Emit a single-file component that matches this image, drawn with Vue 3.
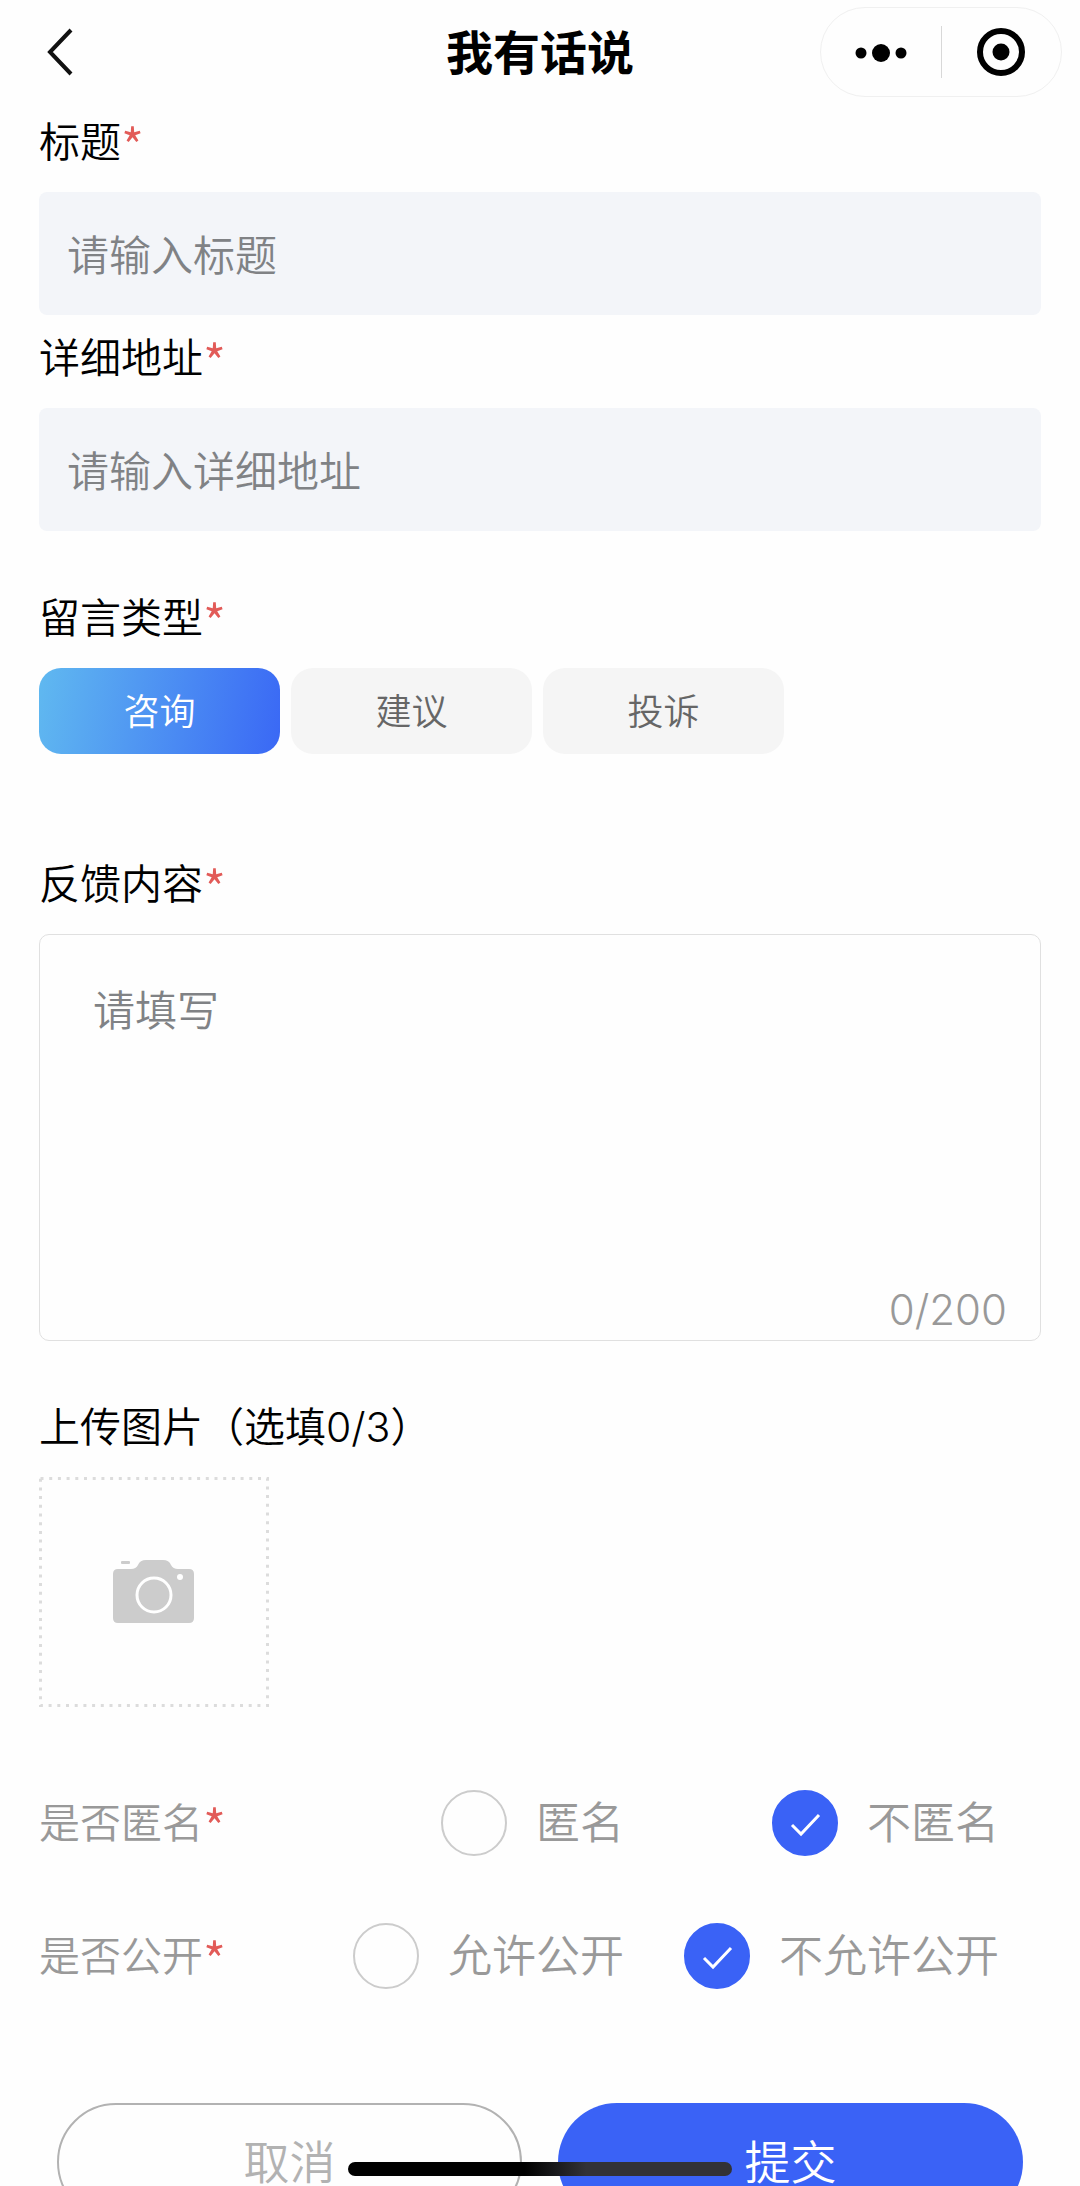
<template>
  <div class="screen">
    <header class="navbar">
      <button class="back" aria-label="返回">
        <svg width="28" height="50" viewBox="0 0 28 50">
          <path d="M25 3 L4 25 L25 47" fill="none" stroke="#111" stroke-width="4" />
        </svg>
      </button>
      <h1>我有话说</h1>
      <div class="capsule">
        <button aria-label="更多">
          <svg width="54" height="50" viewBox="0 0 54 50">
            <circle cx="7" cy="26" r="5.5" />
            <circle cx="27" cy="26" r="9" />
            <circle cx="47" cy="26" r="5.5" />
          </svg>
        </button>
        <span class="capsuleLine"></span>
        <button aria-label="关闭">
          <svg width="50" height="50" viewBox="0 0 50 50">
            <circle cx="25" cy="25" r="21" fill="none" stroke="#000" stroke-width="6" />
            <circle cx="25" cy="25" r="8.5" />
          </svg>
        </button>
      </div>
    </header>

    <form @submit.prevent>
      <div class="field">
        <label class="label" for="title">标题<i>*</i></label>
        <input id="title" v-model="form.title" class="textInput" type="text" placeholder="请输入标题" />
      </div>

      <div class="field">
        <label class="label" for="address">详细地址<i>*</i></label>
        <input id="address" v-model="form.address" class="textInput" type="text" placeholder="请输入详细地址" />
      </div>

      <div class="field typeField">
        <div id="typeLabel" class="label">留言类型<i>*</i></div>
        <div class="types" role="group" aria-labelledby="typeLabel">
          <button
            v-for="type in types"
            :key="type"
            type="button"
            class="type"
            :class="{ active: form.type === type }"
            :aria-pressed="form.type === type"
            @click="form.type = type"
          >{{ type }}</button>
        </div>
      </div>

      <div class="field contentField">
        <label class="label" for="content">反馈内容<i>*</i></label>
        <div class="contentBox">
          <textarea id="content" v-model="form.content" maxlength="200" placeholder="请填写"></textarea>
          <div class="counter">{{ form.content.length }}/200</div>
        </div>
      </div>

      <div class="field uploadField">
        <div class="label">上传图片（选填<span class="digits">0/3</span>）</div>
        <button type="button" class="upload" aria-label="上传图片">
          <svg width="230" height="230" viewBox="0 0 230 230">
            <rect x="1.5" y="1.5" width="227" height="227" fill="none" stroke="#dcdcdc" stroke-width="3" stroke-dasharray="3 5.7" />
            <path
              d="M79 92 H92 Q97 92 99 88 Q101 83 107 83 H124 Q130 83 132 88 Q134 92 139 92 H150 Q155 92 155 97 V141 Q155 146 150 146 H79 Q74 146 74 141 V97 Q74 92 79 92 Z"
              fill="#ccc"
            />
            <rect x="82" y="84" width="9" height="3" rx="1" fill="#ccc" />
            <circle cx="115" cy="118" r="17" fill="none" stroke="#fff" stroke-width="3" />
            <circle cx="141" cy="100" r="3" fill="#fff" />
          </svg>
        </button>
      </div>

      <div class="choices">
        <div v-for="row in rows" :key="row.name" class="choice" role="radiogroup" :aria-label="row.label">
          <div class="label choiceLabel">{{ row.label }}<i>*</i></div>
          <label v-for="option in row.options" :key="option" class="option">
            <span class="radio">
              <input v-model="form[row.name]" type="radio" :name="row.name" :value="option" />
              <svg v-if="form[row.name] === option" width="66" height="66" viewBox="0 0 66 66">
                <path d="M20 35 L29 44 L47 25" fill="none" stroke="#fff" stroke-width="3" />
              </svg>
            </span>
            <span class="optionText">{{ option }}</span>
          </label>
        </div>
      </div>

      <div class="actions">
        <button type="button" class="cancel">取消</button>
        <button type="submit" class="submit">提交</button>
      </div>
    </form>

    <div class="homeBar"></div>
  </div>
</template>

<script setup>
import { reactive } from 'vue'

const types = ['咨询', '建议', '投诉']

const rows = [
  { name: 'anonymous', label: '是否匿名', options: ['匿名', '不匿名'] },
  { name: 'open', label: '是否公开', options: ['允许公开', '不允许公开'] }
]

const form = reactive({
  title: '',
  address: '',
  type: '咨询',
  content: '',
  anonymous: '不匿名',
  open: '不允许公开'
})
</script>

<style>
body {
  margin: 0;
  background-color: #fefefe;
}
</style>

<style scoped>
.screen {
  height: 100vh;
  overflow-y: auto;
  scrollbar-width: none;
  box-sizing: border-box;
  background-color: #fefefe;
  color: #000;
  font-family: "Noto Sans CJK SC", sans-serif;
  font-weight: 350;
}
.screen * {
  box-sizing: border-box;
}
button,
input,
textarea {
  font-family: inherit;
  font-weight: inherit;
  margin: 0;
}
button {
  padding: 0;
  border: none;
  background: none;
  cursor: pointer;
}
svg {
  display: block;
}

/* top bar */
.navbar {
  display: grid;
  grid-template-columns: 1fr auto 1fr;
  align-items: center;
  height: 103px;
  padding: 0 18px 0 46px;
}
.back {
  justify-self: start;
}
.navbar h1 {
  margin: 0;
  padding: 0 28px 4px 0;
  font-size: 47px;
  line-height: 60px;
  font-weight: 700;
}
.capsule {
  justify-self: end;
  display: grid;
  grid-template-columns: 1fr 1px 1fr;
  align-items: center;
  justify-items: center;
  width: 242px;
  height: 90px;
  border: 1px solid #f0f0f0;
  border-radius: 45px;
}
.capsuleLine {
  width: 1px;
  height: 52px;
  background-color: #d8d8d8;
}

/* form */
form {
  padding: 6px 39px 0;
}
.field {
  margin-bottom: 10px;
}
.label {
  display: block;
  margin-bottom: 23px;
  font-size: 41px;
  line-height: 60px;
}
.label i {
  font-style: normal;
  font-size: 50px;
  line-height: 0;
  vertical-align: -9px;
  color: #e25b58;
}
.digits {
  font-family: Inter, "Noto Sans CJK SC", sans-serif;
  line-height: 0;
}
.textInput {
  display: block;
  width: 100%;
  height: 123px;
  padding: 0 28px 2px;
  border: none;
  border-radius: 8px;
  background-color: #f3f5f9;
  font-size: 42px;
}
.textInput::placeholder,
textarea::placeholder {
  color: #808285;
  opacity: 1;
}
.typeField {
  margin-top: 54px;
}
.types {
  display: flex;
  gap: 11px;
}
.type {
  width: 241px;
  height: 86px;
  padding-bottom: 4px;
  border-radius: 22px;
  background-color: #f5f5f5;
  color: #666;
  font-size: 36px;
}
.type.active {
  background: linear-gradient(100deg, #60b9f0, #3a68f5);
  color: #fff;
}
.contentField {
  margin-top: 97px;
}
.contentBox {
  display: flex;
  flex-direction: column;
  height: 407px;
  border: 1px solid #e0e0e0;
  border-radius: 10px;
}
.contentBox textarea {
  flex: 1;
  width: 100%;
  padding: 43px 53px 0;
  border: none;
  background: none;
  resize: none;
  font-size: 42px;
  line-height: 60px;
}
.counter {
  padding-right: 33px;
  text-align: right;
  color: #999;
  font-family: Inter, "Noto Sans CJK SC", sans-serif;
  font-size: 42px;
  line-height: 60px;
}
.uploadField {
  margin-top: 53px;
}
.upload {
  display: block;
}

/* radio rows */
.choices {
  display: grid;
  gap: 67px;
  padding-right: 42px;
  margin-top: 83px;
}
.choice {
  display: grid;
  grid-template-columns: 210px 1fr 1fr;
  align-items: center;
  color: #999;
}
.choiceLabel {
  margin-bottom: 0;
}
.choiceLabel,
.optionText {
  padding-bottom: 6px;
}
.option {
  display: flex;
  align-items: center;
  justify-content: flex-end;
  gap: 29px;
  font-size: 44px;
  line-height: 60px;
  white-space: nowrap;
}
.radio {
  display: grid;
}
.radio input {
  grid-area: 1 / 1;
  appearance: none;
  width: 66px;
  height: 66px;
  border: 2px solid #ccc;
  border-radius: 50%;
}
.radio input:checked {
  border-color: #3a62f6;
  background-color: #3a62f6;
}
.radio svg {
  grid-area: 1 / 1;
  pointer-events: none;
}

/* bottom buttons */
.actions {
  display: grid;
  grid-template-columns: 1fr 1fr;
  gap: 36px;
  padding: 0 18px 40px;
  margin-top: 114px;
}
.actions button {
  height: 118px;
  padding-bottom: 6px;
  border-radius: 59px;
  font-size: 46px;
  line-height: 60px;
}
.cancel {
  border: 2px solid #b2b2b2;
  color: #b2b2b2;
}
.submit {
  background-color: #3a62f6;
  color: #fff;
}
.homeBar {
  position: fixed;
  bottom: 10px;
  left: 50%;
  width: 384px;
  height: 14px;
  margin-left: -192px;
  border-radius: 7px;
  background: linear-gradient(90deg, #000 46%, #323236 62%);
}
</style>
